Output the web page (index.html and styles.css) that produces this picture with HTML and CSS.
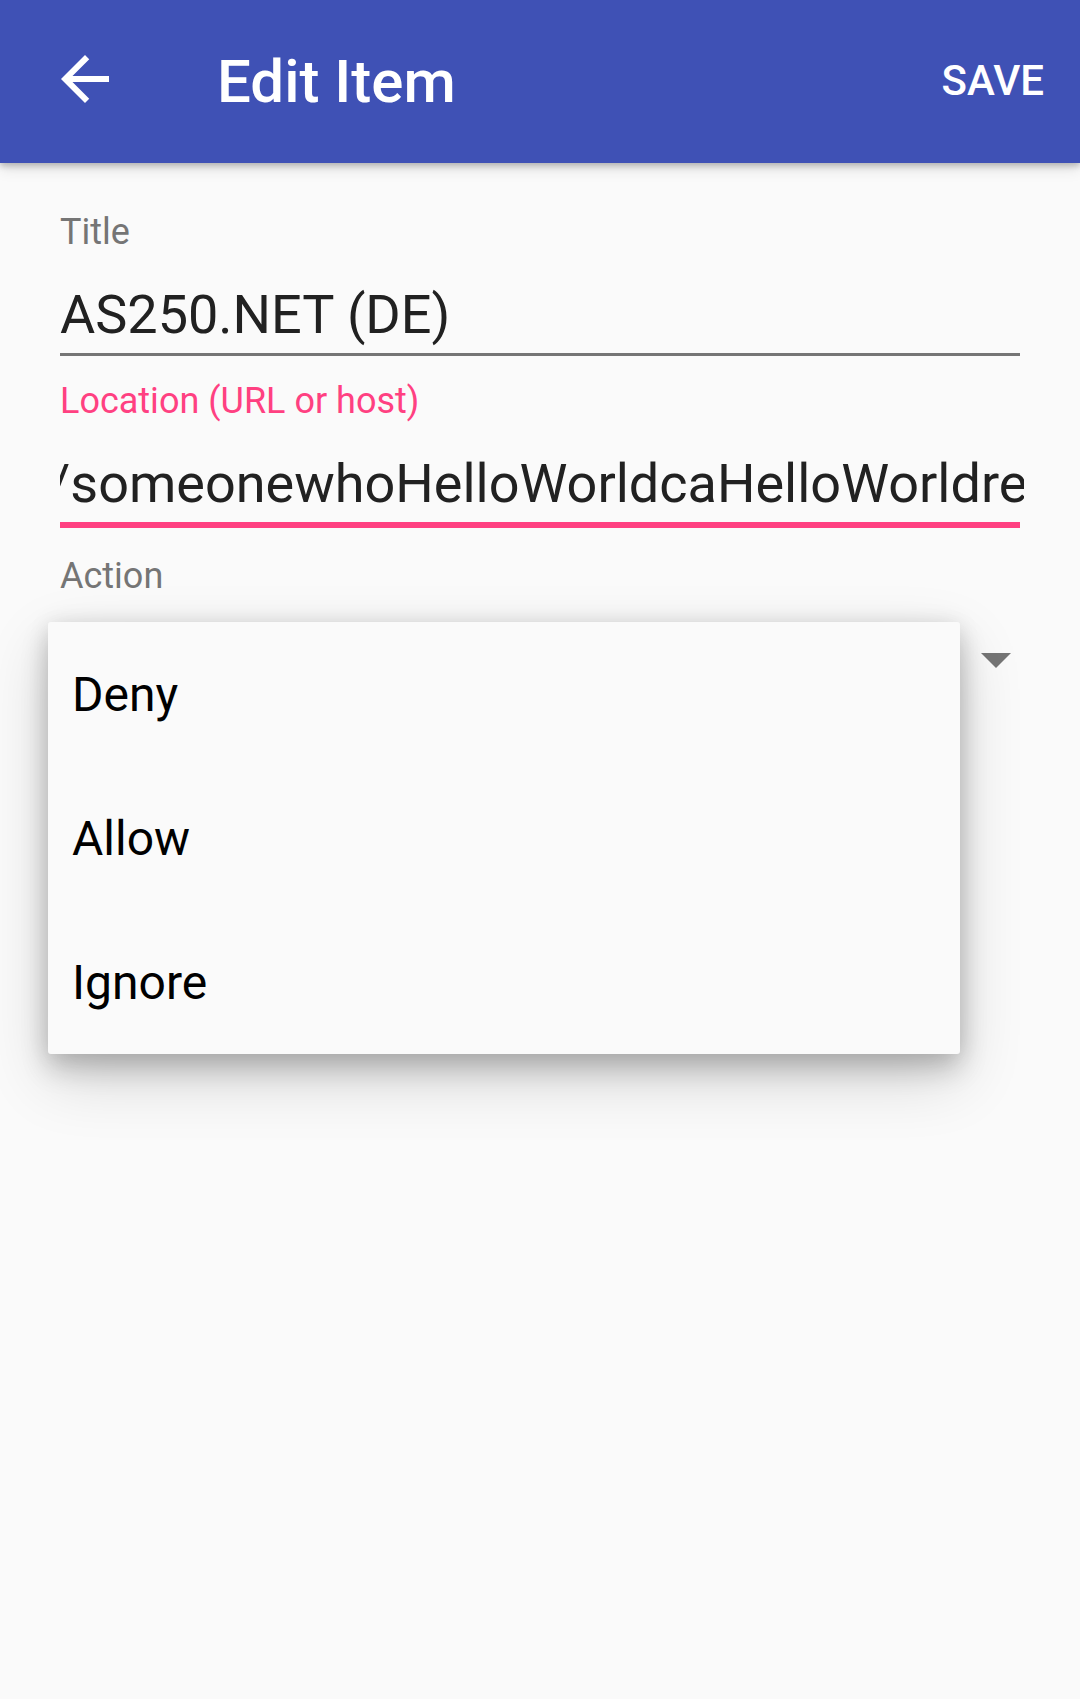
FILE: index.html
```html
<!DOCTYPE html>
<html lang="en">
<head>
<meta charset="utf-8">
<title>Edit Item</title>
<link rel="stylesheet" href="styles.css">
</head>
<body>
<header class="appbar">
  <span class="nav-btn">
    <svg class="nav-icon" viewBox="0 0 24 24" width="72" height="72"><path d="M20 11H7.83l5.59-5.59L12 4l-8 8 8 8 1.41-1.41L7.83 13H20v-2z" fill="#ffffff"/></svg>
  </span>
  <h1 class="appbar-title">Edit Item</h1>
  <span class="appbar-action">SAVE</span>
</header>
<main class="form">
  <div class="field">
    <div class="field-label">Title</div>
    <div class="field-value">AS250.NET (DE)</div>
    <div class="field-line"></div>
  </div>
  <div class="field field-focused">
    <div class="field-label">Location (URL or host)</div>
    <div class="field-value field-scroll"><span class="scroll-text">/someonewhoHelloWorldcaHelloWorldreallyWantsToBeBlocked</span></div>
    <div class="field-line"></div>
  </div>
  <div class="field field-spinner">
    <div class="field-label">Action</div>
    <div class="spinner-row">
      <span class="spinner-value">Deny</span>
      <svg class="spinner-arrow" viewBox="0 0 30 15" width="30" height="15"><polygon points="0,0 30,0 15,15" fill="#757575"/></svg>
    </div>
  </div>
  <ul class="popup">
    <li class="popup-item">Deny</li>
    <li class="popup-item">Allow</li>
    <li class="popup-item">Ignore</li>
  </ul>
</main>
</body>
</html>
```
FILE: styles.css
```css
html, body {
  margin: 0;
  padding: 0;
}
body {
  background: #fafafa;
  font-family: Roboto, "Noto Sans", "Liberation Sans", sans-serif;
  width: 1080px;
  height: 1699px;
  overflow: hidden;
}
.appbar {
  position: relative;
  z-index: 2;
  height: 163px;
  background: #3f51b5;
  display: flex;
  align-items: center;
  box-shadow: 0 3px 6px rgba(0,0,0,0.22), 0 6px 14px rgba(0,0,0,0.10);
  color: #ffffff;
}
.nav-btn {
  display: flex;
  margin-left: 49px;
  margin-bottom: 6px;
}
.nav-icon {
  display: block;
}
.appbar-title {
  margin: 0 0 0 96px;
  font-size: 60px;
  font-weight: 500;
  line-height: 70px;
  flex: 1;
}
.appbar-action {
  font-size: 42px;
  font-weight: 500;
  line-height: 50px;
  margin-right: 36px;
  margin-bottom: 2px;
}
.form {
  position: relative;
  padding: 48px 60px 0 60px;
}
.field {
  display: flex;
  flex-direction: column;
}
.field-label {
  font-size: 36px;
  line-height: 42px;
  color: #757575;
}
.field-value {
  margin-top: 30px;
  font-size: 54px;
  line-height: 64px;
  color: #212121;
  white-space: nowrap;
}
.field-scroll {
  overflow: hidden;
  margin-right: -4px;
}
.scroll-text {
  display: inline-block;
  margin-left: -12px;
}
.field-line {
  margin-top: 6px;
  height: 3px;
  background: #757575;
  margin-bottom: 24px;
}
.field-focused .field-line {
  height: 6px;
  background: #ff4081;
  margin-bottom: 27px;
}
.field-focused .field-label {
  color: #ff4081;
}
.spinner-row {
  display: flex;
  align-items: center;
  justify-content: space-between;
  height: 126px;
  margin-right: 9px;
}
.spinner-value {
  font-size: 48px;
  color: #212121;
}
.spinner-arrow {
  display: block;
}
.popup {
  position: absolute;
  left: 48px;
  top: 459px;
  width: 912px;
  margin: 0;
  padding: 0;
  list-style: none;
  background: #fafafa;
  border-radius: 3px;
  box-shadow: 0 14px 28px rgba(0,0,0,0.20), 0 24px 64px rgba(0,0,0,0.16), 0 0 22px rgba(0,0,0,0.08);
}
.popup-item {
  height: 144px;
  display: flex;
  align-items: center;
  padding-left: 24px;
  padding-top: 1px;
  box-sizing: border-box;
  font-size: 48px;
  color: #000000;
}
```
